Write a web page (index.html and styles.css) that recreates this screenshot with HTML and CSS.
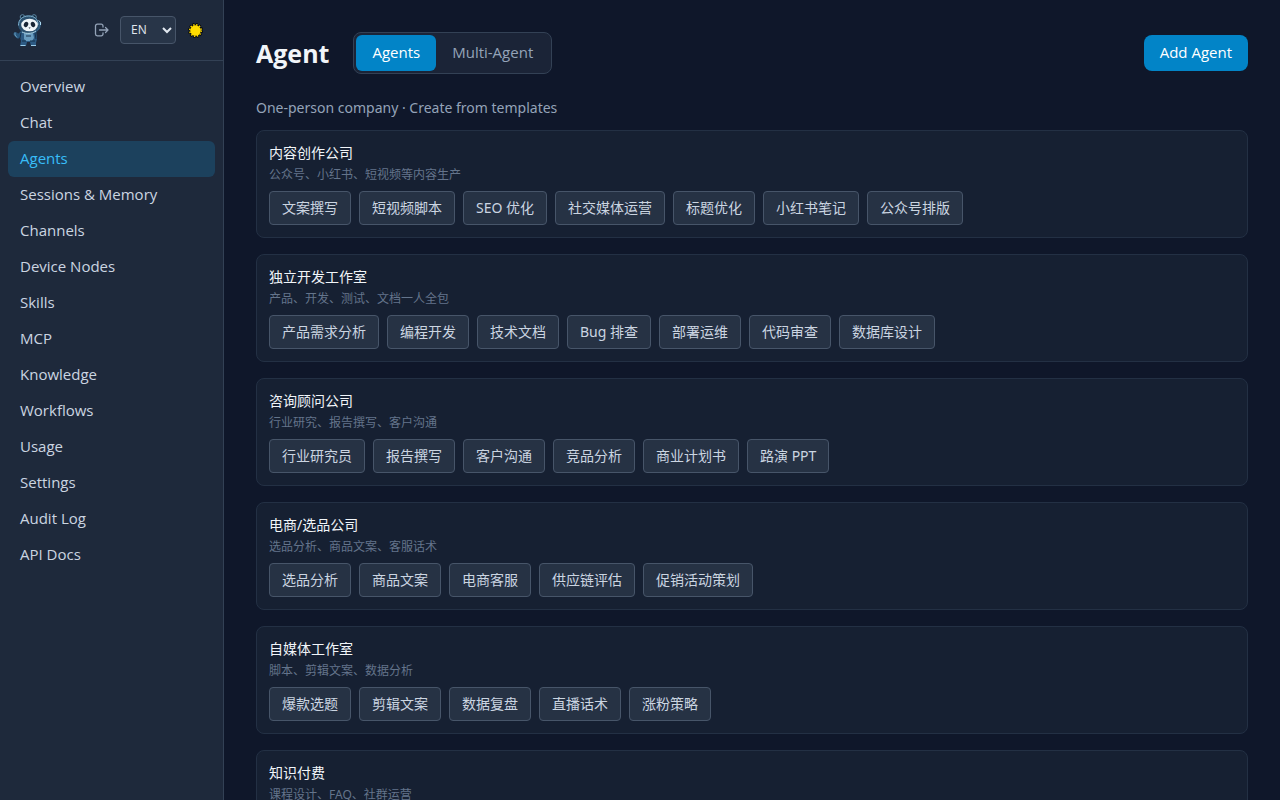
FILE: index.html
```html
<!DOCTYPE html>
<html lang="en">
<head>
<meta charset="utf-8">
<meta name="viewport" content="width=device-width, initial-scale=1">
<title>Agent</title>
<link rel="stylesheet" href="styles.css">
</head>
<body>
<div class="app">
  <aside class="sidebar">
    <header class="sidebar-head">
      <a class="brand" href="#" aria-label="Home">
        <svg width="32" height="36" viewBox="0 0 32 36" fill="none">
          <path d="M10 21 6 24.500 3.500 22" stroke="#28567c" stroke-width="4" stroke-linecap="round" stroke-linejoin="round"/>
          <path d="M3 20.500v2.500l2 2.500" stroke="#6c9fc0" stroke-width="1"/>
          <path d="M23 19 26.500 15.500 27.500 11.500" stroke="#315d80" stroke-width="3.500" stroke-linecap="round"/>
          <path d="M26.500 8.500l2 1.500v3" stroke="#a9d6ee" stroke-width="1"/>
          <path d="M9 18h15l1 9-1 4v3h-5l-1-4h-3l-1 4H8l1-5-1-4z" fill="#2d5a83"/>
          <path d="M12 21h9l1 5-2 3h-6l-2-2z" fill="#6a9dc0"/>
          <path d="M9 21l-1 5M23 21l1 6M14 24h5M10 29h4M18 29h5" stroke="#16304a" stroke-width="1"/>
          <path d="M8.500 33.500h5M19 33.500h5" stroke="#9accea" stroke-width="1"/>
          <circle cx="10.500" cy="5" r="2.300" fill="#102438" stroke="#5f8aa8"/>
          <circle cx="22" cy="5" r="2.300" fill="#102438" stroke="#5f8aa8"/>
          <ellipse cx="16.500" cy="12.500" rx="10.500" ry="9.500" fill="#2b506e"/>
          <path d="M6.500 13.500c0-6 4-9.500 10-9.500s9.500 3 9.500 9" stroke="#7fb0cd" stroke-width="1"/>
          <ellipse cx="17.500" cy="13" rx="8.300" ry="6.300" fill="#eef4f8"/>
          <ellipse cx="14" cy="12.500" rx="2.100" ry="2.700" transform="rotate(25 14 12.500)" fill="#182535"/>
          <ellipse cx="21" cy="12.500" rx="2.100" ry="2.700" transform="rotate(-25 21 12.500)" fill="#182535"/>
          <path d="M16.500 15.500h2.200l-1.100 1.200z" fill="#182535"/>
          <path d="M10 20c4 2 10 2 14-1" stroke="#b0d8ea" stroke-width="1"/>
        </svg>
      </a>
      <div class="tools">
        <button class="icon-btn" type="button" aria-label="Log out">
          <svg width="16" height="16" viewBox="0 0 16 16" fill="none" stroke="currentColor" stroke-width="1.300" stroke-linecap="round" stroke-linejoin="round"><path d="M10 5V4A1.800 1.800 0 0 0 8.200 2.200H4.300A1.800 1.800 0 0 0 2.500 4v8A1.800 1.800 0 0 0 4.300 13.800h3.900A1.800 1.800 0 0 0 10 12v-1M6.500 8h8.500M12.500 5.500 15 8 12.500 10.500"/></svg>
        </button>
        <span class="lang">
          <select aria-label="Language"><option>EN</option></select>
          <svg class="chevron" width="10" height="8" viewBox="0 0 10 8" fill="none" stroke="currentColor" stroke-width="2"><path d="M1 2l4 4 4-4"/></svg>
        </span>
        <button class="icon-btn" type="button" aria-label="Toggle theme">
          <svg width="16" height="16" viewBox="0 0 16 16"><circle cx="8.500" cy="8.500" r="6.600" fill="none" stroke="#07090b" stroke-width="1.800" stroke-dasharray="2.200 1.256"/><circle cx="8.500" cy="8.500" r="6.200" fill="#07090b"/><circle cx="8.500" cy="8.500" r="5.700" fill="none" stroke="#ffdc00" stroke-width="1.600" stroke-dasharray="1.300 1.684"/><circle cx="8.500" cy="8.500" r="5.200" fill="#ffdc00"/></svg>
        </button>
      </div>
    </header>
    <nav class="nav">
      <a href="#">Overview</a>
      <a href="#">Chat</a>
      <a href="#" class="active" aria-current="page">Agents</a>
      <a href="#">Sessions &amp; Memory</a>
      <a href="#">Channels</a>
      <a href="#">Device Nodes</a>
      <a href="#">Skills</a>
      <a href="#">MCP</a>
      <a href="#">Knowledge</a>
      <a href="#">Workflows</a>
      <a href="#">Usage</a>
      <a href="#">Settings</a>
      <a href="#">Audit Log</a>
      <a href="#">API Docs</a>
    </nav>
  </aside>
  <main class="main">
    <header class="page-head">
      <h1>Agent</h1>
      <div class="tabs">
        <button type="button" class="tab selected">Agents</button>
        <button type="button" class="tab">Multi-Agent</button>
      </div>
      <button type="button" class="primary">Add Agent</button>
    </header>
    <p class="intro">One-person company · Create from templates</p>
    <div class="cards" lang="zh-CN">
      <section class="card">
        <h2>内容创作公司</h2>
        <p>公众号、小红书、短视频等内容生产</p>
        <div class="chips">
          <button type="button">文案撰写</button><button type="button">短视频脚本</button><button type="button">SEO 优化</button><button type="button">社交媒体运营</button><button type="button">标题优化</button><button type="button">小红书笔记</button><button type="button">公众号排版</button>
        </div>
      </section>
      <section class="card">
        <h2>独立开发工作室</h2>
        <p>产品、开发、测试、文档一人全包</p>
        <div class="chips">
          <button type="button">产品需求分析</button><button type="button">编程开发</button><button type="button">技术文档</button><button type="button">Bug 排查</button><button type="button">部署运维</button><button type="button">代码审查</button><button type="button">数据库设计</button>
        </div>
      </section>
      <section class="card">
        <h2>咨询顾问公司</h2>
        <p>行业研究、报告撰写、客户沟通</p>
        <div class="chips">
          <button type="button">行业研究员</button><button type="button">报告撰写</button><button type="button">客户沟通</button><button type="button">竞品分析</button><button type="button">商业计划书</button><button type="button">路演 PPT</button>
        </div>
      </section>
      <section class="card">
        <h2>电商/选品公司</h2>
        <p>选品分析、商品文案、客服话术</p>
        <div class="chips">
          <button type="button">选品分析</button><button type="button">商品文案</button><button type="button">电商客服</button><button type="button">供应链评估</button><button type="button">促销活动策划</button>
        </div>
      </section>
      <section class="card">
        <h2>自媒体工作室</h2>
        <p>脚本、剪辑文案、数据分析</p>
        <div class="chips">
          <button type="button">爆款选题</button><button type="button">剪辑文案</button><button type="button">数据复盘</button><button type="button">直播话术</button><button type="button">涨粉策略</button>
        </div>
      </section>
      <section class="card">
        <h2>知识付费</h2>
        <p>课程设计、FAQ、社群运营</p>
      </section>
    </div>
  </main>
</div>
</body>
</html>
```

FILE: styles.css
```css
* { box-sizing: border-box; }

body {
  margin: 0;
  background: #0f172a;
  color: #f1f5f9;
  font: 15px/20px "Open Sans", "Noto Sans", sans-serif;
}

button, select { font: inherit; color: inherit; cursor: pointer; }
h1, h2, p { margin: 0; }

.app { display: flex; height: 100vh; }

.sidebar {
  flex: none;
  width: 224px;
  background: #1e293b;
  border-right: 1px solid #334155;
}

.sidebar-head {
  display: flex;
  align-items: center;
  justify-content: space-between;
  padding: 12px;
  border-bottom: 1px solid #334155;
}

.brand { display: flex; }
.tools { display: flex; align-items: center; gap: 3px; }

.icon-btn {
  display: flex;
  padding: 8px;
  border: 0;
  background: none;
  color: #94a3b8;
}

.lang { position: relative; color: #e2e8f0; }

.lang select {
  display: block;
  appearance: none;
  width: 56px;
  height: 28px;
  padding: 0 10px;
  border: 1px solid #475569;
  border-radius: 4px;
  background: #283548;
  font-size: 12px;
}

.chevron { position: absolute; right: 4px; top: 10px; pointer-events: none; }

.nav { display: flex; flex-direction: column; padding: 8px; }

.nav a {
  padding: 7px 12px 9px;
  border-radius: 6px;
  color: #cbd5e1;
  text-decoration: none;
}

.nav .active { background: #1c415d; color: #38bdf8; }

.main {
  flex: 1;
  min-width: 0;
  padding: 32px;
  overflow-y: auto;
  scrollbar-width: none;
}

.page-head { display: flex; align-items: center; margin-bottom: 24px; }
.page-head h1 { font-size: 25px; line-height: 32px; font-weight: 700; margin-right: 24px; }

.tabs {
  display: flex;
  padding: 2px;
  border: 1px solid #334155;
  border-radius: 8px;
  background: #1b2437;
}

.tab {
  padding: 7px 16px 9px;
  border: 0;
  border-radius: 6px;
  background: none;
  color: #94a3b8;
}

.tab.selected { background: #0284c7; color: #fff; }

.primary {
  margin-left: auto;
  padding: 7px 16px 9px;
  border: 0;
  border-radius: 8px;
  background: #0284c7;
  color: #fff;
}

.intro {
  margin-bottom: 12px;
  color: #94a3b8;
  font-family: "Noto Sans", sans-serif;
  font-size: 14px;
}

.cards {
  display: flex;
  flex-direction: column;
  gap: 16px;
  font-family: "Noto Sans", "Noto Sans CJK SC", sans-serif;
  font-size: 14px;
}

.card {
  padding: 12px;
  border: 1px solid #233044;
  border-radius: 8px;
  background: #162032;
}

.card h2 { font-size: 14px; line-height: 20px; font-weight: 400; }
.card p { margin-top: 4px; color: #64748b; font-size: 12px; line-height: 16px; }

.chips { display: flex; flex-wrap: wrap; gap: 8px; margin-top: 8px; }

.chips button {
  padding: 6px 12px;
  border: 1px solid #475569;
  border-radius: 4px;
  background: #263244;
  color: #cbd5e1;
}
```
